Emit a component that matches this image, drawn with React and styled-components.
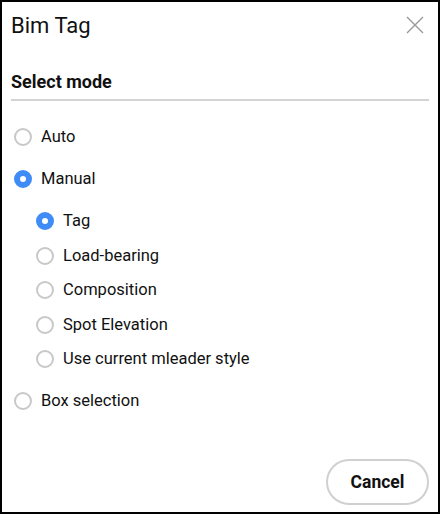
import React from 'react'
import styled, { createGlobalStyle } from 'styled-components'

const Global = createGlobalStyle`
  html, body { margin: 0; padding: 0; background: #fff; }
  body { font-family: Roboto, "Liberation Sans", sans-serif; color: #111; }
`

const Dialog = styled.div`
  box-sizing: border-box;
  width: 440px;
  height: 514px;
  border: 2px solid #000;
  background: #fff;
  display: flex;
  flex-direction: column;
  padding: 0 9px 7px 9px;
`

const Header = styled.header`
  display: flex;
  align-items: center;
  justify-content: space-between;
  height: 46px;
`

const Title = styled.h1`
  margin: 0;
  font-size: 22px;
  font-weight: 400;
  color: #111;
`

const CloseButton = styled.button`
  border: none;
  background: none;
  padding: 0;
  margin-right: 5px;
  width: 18px;
  height: 18px;
  display: flex;
  cursor: pointer;
`

const Section = styled.h2`
  margin: 22px 0 0;
  font-size: 18px;
  font-weight: 700;
  padding-bottom: 5px;
  border-bottom: 2px solid #d4d4d4;
  line-height: 24px;
`

const List = styled.div`
  display: flex;
  flex-direction: column;
  padding-top: 27px;
  flex: 1;
`

const SubList = styled.div`
  display: flex;
  flex-direction: column;
  gap: 16.5px;
  padding: 24px 0 24px 22px;
`

const Option = styled.label`
  display: flex;
  align-items: center;
  gap: 9px;
  font-size: 16.5px;
  line-height: 18px;
  height: 18px;
  margin-left: 3px;
  color: #111;
  cursor: pointer;
`

const TopOption = styled(Option)`
  & + & { margin-top: 24px; }
`

const Dot = styled.span`
  box-sizing: border-box;
  width: 18px;
  height: 18px;
  border-radius: 50%;
  flex: none;
  border: ${p => (p.$on ? '6px solid #3f8cf6' : '2px solid #c8c8c8')};
  background: #fff;
`

const Footer = styled.div`
  display: flex;
  justify-content: flex-end;
`

const CancelButton = styled.button`
  width: 103px;
  height: 46px;
  border-radius: 23px;
  border: 2px solid #d0d0d0;
  background: #fff;
  font-family: inherit;
  font-size: 17.5px;
  font-weight: 700;
  color: #111;
  cursor: pointer;
`

const subModes = ['Tag', 'Load-bearing', 'Composition', 'Spot Elevation', 'Use current mleader style']

export default function App() {
  return (
    <Dialog>
      <Global />
      <Header>
        <Title>Bim Tag</Title>
        <CloseButton aria-label="Close">
          <svg width="18" height="18" viewBox="0 0 18 18">
            <path d="M1 1L17 17M17 1L1 17" stroke="#9a9a9a" strokeWidth="1.4" />
          </svg>
        </CloseButton>
      </Header>
      <Section>Select mode</Section>
      <List>
        <TopOption><Dot />Auto</TopOption>
        <TopOption><Dot $on />Manual</TopOption>
        <SubList>
          {subModes.map((m, i) => (
            <Option key={m}><Dot $on={i === 0} />{m}</Option>
          ))}
        </SubList>
        <Option><Dot />Box selection</Option>
      </List>
      <Footer>
        <CancelButton>Cancel</CancelButton>
      </Footer>
    </Dialog>
  )
}
